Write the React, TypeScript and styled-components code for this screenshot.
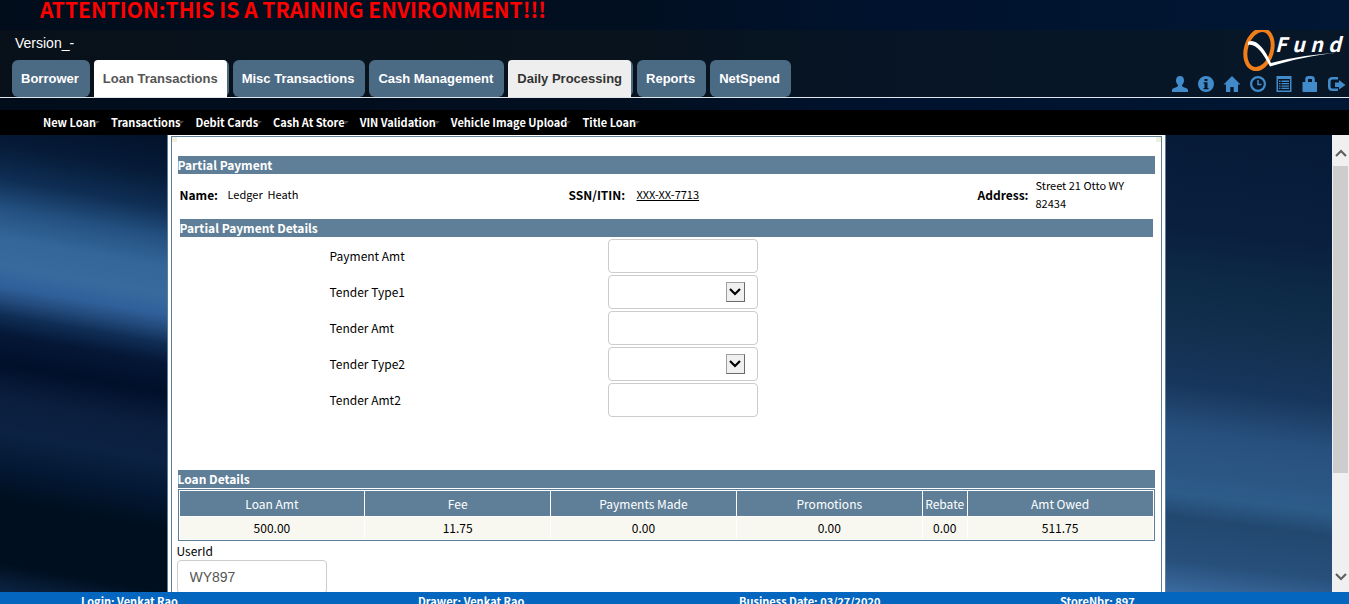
import React from "react";
import styled, { createGlobalStyle } from "styled-components";

const humanist = `"Noto Sans CJK SC", "Noto Sans", sans-serif`;
const grotesk = `"Liberation Sans", Arial, sans-serif`;
const steel = "#5f7f98";

const GlobalStyle = createGlobalStyle`
  *, *::before, *::after { box-sizing: border-box; }
  body { margin: 0; background: #000d20; overflow: hidden; }
`;

const Page = styled.div`
  display: flex;
  flex-direction: column;
  height: 100vh;
  overflow: hidden;
  font-family: ${humanist};
  font-size: 12px;
  line-height: 18px;
  color: #000;
`;

const Header = styled.header`
  flex: none;
  background: linear-gradient(90deg, #020d1c 0%, #020f20 45%, #00122d 65%, #011733 100%);
`;

const Warning = styled.h1`
  margin: 0;
  height: 30px;
  padding-left: 40px;
  font-size: 21px;
  line-height: 18px;
  font-weight: 700;
  color: #f00;
  white-space: nowrap;
`;

const Banner = styled.div`
  display: flex;
  justify-content: space-between;
  height: 68px;
  border-bottom: 1px solid #dfe6ec;
  background: rgba(18, 24, 24, 0.4);
`;

const BannerLeft = styled.div`
  display: flex;
  flex-direction: column;
  justify-content: space-between;
`;

const Version = styled.div`
  padding: 4px 0 0 15px;
  font-family: ${grotesk};
  font-size: 14px;
  color: #fff;
`;

const Tabs = styled.nav`
  display: flex;
  gap: 4px;
  padding-left: 12px;
`;

const Tab = styled.div`
  padding-right: 2px;
  border-radius: 6px;
  background: #4b6a84;
`;

const tabLook = {
  plain: { back: "transparent", ink: "#fff" },
  current: { back: "#fff", ink: "#555" },
  hover: { back: "#eee", ink: "#333" },
};

const TabLink = styled.a<{ $look: keyof typeof tabLook }>`
  display: block;
  padding: 0 9px;
  border-radius: 4px 4px 0 0;
  font-family: ${grotesk};
  font-size: 13px;
  font-weight: 700;
  line-height: 37px;
  text-decoration: none;
  white-space: nowrap;
  background: ${(p) => tabLook[p.$look].back};
  color: ${(p) => tabLook[p.$look].ink};
`;

const BannerRight = styled.div`
  display: flex;
  flex-direction: column;
  align-items: flex-end;
  justify-content: space-between;
  padding: 0 5px 5px 0;
`;

const IconRow = styled.div`
  display: flex;
  gap: 10px;
`;

const IconButton = styled.button`
  display: block;
  width: 16px;
  height: 16px;
  padding: 0;
  border: 0;
  background: none;
  color: #428bca;
  svg { display: block; overflow: visible; }
`;

const MenuBar = styled.nav`
  display: flex;
  margin-top: 12px;
  padding-left: 43px;
  height: 25px;
  background: #000;
`;

const MenuLink = styled.a`
  display: flex;
  align-items: center;
  margin-right: 11px;
  font-size: 11px;
  font-weight: 700;
  line-height: 25px;
  color: #fff;
  text-decoration: none;
  white-space: nowrap;
  &::after {
    content: "";
    margin-left: -2px;
    border: 3px solid transparent;
    border-top-color: #444;
    border-bottom: 0;
  }
`;

const Body = styled.div`
  display: flex;
  flex: 1;
  min-height: 0;
`;

const Stage = styled.main`
  display: flex;
  justify-content: center;
  flex: 1;
  min-width: 0;
  overflow: hidden;
`;

const Glow = styled.div<{ $stops: string }>`
  flex: 1;
  background: linear-gradient(${(p) => p.$stops});
`;

const Sheet = styled.div`
  width: 75%;
  padding: 1px 3px 0;
  border: solid ${steel};
  border-width: 0 1px;
  background: #fff;
`;

const SheetFrame = styled.div`
  min-height: 100%;
  padding: 19px 6px 0;
  border: 1px solid ${steel};
  background:
    linear-gradient(#eef1dc, #eef1dc) left top / 5px 5px no-repeat,
    linear-gradient(#eef1dc, #eef1dc) right top / 5px 5px no-repeat;
`;

const Bar = styled.h2<{ $inset?: boolean }>`
  margin: 0 ${(p) => (p.$inset ? 2 : 0)}px;
  font-size: 12px;
  line-height: 18px;
  font-weight: 700;
  color: #fff;
  background: ${steel};
`;

const Person = styled.dl`
  display: grid;
  grid-template-columns: 48px 341px 68px 341px 58px 1fr;
  align-items: center;
  margin: 0;
  padding: 0 0 3px 2px;
  height: 45px;
  dt { font-weight: 700; }
  dd { margin: 0; padding-bottom: 2px; font-size: 11px; }
  a { color: #000; }
`;

const Address = styled.dd`
  max-width: 100px;
`;

const Fields = styled.div`
  display: grid;
  gap: 2px;
  padding: 2px 0 53px 152px;
`;

const Field = styled.div`
  display: grid;
  grid-template-columns: 278px 150px;
  align-items: center;
`;

const TextBox = styled.input`
  display: block;
  width: 150px;
  height: 34px;
  padding: 6px 12px;
  border: 1px solid #ccc;
  border-radius: 4px;
  background: #fff;
  font-family: ${grotesk};
  font-size: 14px;
  color: #555;
`;

const SelectWrap = styled.div`
  position: relative;
`;

const Select = styled.select`
  appearance: none;
  display: block;
  width: 150px;
  height: 34px;
  padding: 6px 36px 6px 12px;
  border: 1px solid #ccc;
  border-radius: 4px;
  background: #fff;
  font-size: 14px;
`;

const SelectArrow = styled.span`
  position: absolute;
  top: 7px;
  right: 13px;
  display: grid;
  place-items: center;
  width: 19px;
  height: 20px;
  border: 1px solid;
  border-color: #a0a0a0 #696969 #696969 #a0a0a0;
  background: #f0f0f0;
  pointer-events: none;
`;

const LoanTable = styled.table`
  width: 100%;
  margin-top: 1px;
  border: 1px solid ${steel};
  border-collapse: separate;
  border-spacing: 1px;
  table-layout: fixed;
  text-align: center;
  th { height: 25px; padding: 0; font-weight: 400; color: #fff; background: ${steel}; }
  td { height: 22px; padding: 0; background: #f9f8f0; }
`;

const Col = styled.col<{ $width?: string }>`
  width: ${(p) => p.$width ?? "auto"};
`;

const UserField = styled.div`
  margin-left: -1px;
  padding-top: 1px;
  label { display: block; }
`;

const ScrollTrack = styled.div`
  display: flex;
  flex-direction: column;
  width: 17px;
  padding: 0 1px;
  background: #f0f0f0;
`;

const ScrollButton = styled.button<{ $drop?: number }>`
  display: grid;
  place-items: center;
  height: 31px;
  padding: ${(p) => p.$drop ?? 0}px 0 0;
  border: 0;
  background: none;
`;

const ScrollThumb = styled.div`
  flex: 307;
  background: #cdcdcd;
`;

const ScrollSpace = styled.div`
  flex: 88;
`;

const Footer = styled.footer`
  display: grid;
  grid-template-columns: 337px 321px 321px 1fr;
  flex: none;
  height: 12px;
  padding-left: 81px;
  overflow: hidden;
  font-size: 11px;
  font-weight: 700;
  line-height: 18px;
  color: #fff;
  background: #0566bf;
`;

const tabs: { label: string; look: keyof typeof tabLook }[] = [
  { label: "Borrower", look: "plain" },
  { label: "Loan Transactions", look: "current" },
  { label: "Misc Transactions", look: "plain" },
  { label: "Cash Management", look: "plain" },
  { label: "Daily Processing", look: "hover" },
  { label: "Reports", look: "plain" },
  { label: "NetSpend", look: "plain" },
];

const menu = ["New Loan", "Transactions", "Debit Cards", "Cash At Store", "VIN Validation", "Vehicle Image Upload", "Title Loan"];

const fields: { id: string; label: string; select?: boolean }[] = [
  { id: "payment-amt", label: "Payment Amt" },
  { id: "tender-type1", label: "Tender Type1", select: true },
  { id: "tender-amt", label: "Tender Amt" },
  { id: "tender-type2", label: "Tender Type2", select: true },
  { id: "tender-amt2", label: "Tender Amt2" },
];

const loan = [
  { name: "Loan Amt", value: "500.00" },
  { name: "Fee", value: "11.75" },
  { name: "Payments Made", value: "0.00" },
  { name: "Promotions", value: "0.00" },
  { name: "Rebate", value: "0.00", width: "44px" },
  { name: "Amt Owed", value: "511.75" },
];

const leftGlow =
  "190deg, #02122a 0%, #061b38 8%, #0f2e54 15%, #235080 21%, #34669a 27%, #386a9e 33%, #30609a 37%, #22497a 40%, #0f2d54 43%, #051736 47%, #00102a 53%, #0b1e3e 60%, #0c2243 67%, #031833 74%, #000f20 81%, #000f20 94%, #0b2444 100%";
const rightGlow =
  "187deg, #051a37 0%, #0a1e3e 22%, #0c2844 32%, #122f4e 44%, #17365c 56%, #28507e 66%, #2b5684 74%, #2d5c89 79%, #224870 84%, #274f7a 93%, #3a6ba0 100%";

const icons: { name: string; art: React.ReactNode }[] = [
  {
    name: "User",
    art: <path d="M8 0c2.400 0 4 1.500 4 4.200 0 2.100-.8 3.700-1.900 4.700-.4 1 .1 1.500 1.200 2 2.700 1 4.400 1.600 4.700 3.100V16H0v-2c.3-1.500 2-2.100 4.700-3.100 1.100-.5 1.600-1 1.200-2C4.800 7.900 4 6.300 4 4.200 4 1.500 5.600 0 8 0z" />,
  },
  {
    name: "Information",
    art: <path fillRule="evenodd" d="M8 0a8 8 0 1 1 0 16A8 8 0 0 1 8 0zM6.500 3v2h3V3zM5.500 6.200v1.300h1V12h-1v1.200h5V12h-1V6.200z" />,
  },
  {
    name: "Home",
    art: <path d="M8 0l8.500 8.500H14V16H9.700v-5H6.300v5H2V8.500H-.5z" />,
  },
  {
    name: "Time",
    art: (
      <g fill="none" stroke="currentColor">
        <circle cx="8" cy="8" r="6.900" strokeWidth="2.200" />
        <path d="M8 4v4.500h3.500" strokeWidth="1.500" />
      </g>
    ),
  },
  {
    name: "List",
    art: (
      <path
        fillRule="evenodd"
        d="M.5 0h15v16H.5zM2 3v11.500h12V3zM3 4.500h1.500V6H3zM5.500 4.500H13V6H5.500zM3 7h1.500v1.300H3zM5.500 7H13v1.300H5.500zM3 9.400h1.500v1.300H3zM5.500 9.400H13v1.300H5.500zM3 11.800h1.500V13H3zM5.500 11.800H13V13H5.500z"
      />
    ),
  },
  {
    name: "Lock",
    art: <path fillRule="evenodd" d="M3.200 6V3.200C3.200 1.200 4.500 0 6.200 0h3.600c1.700 0 3 1.200 3 3.200V6H15v9.500l-.5.5H1l-.5-.5V6zM6 6h4V3.500L9.500 3h-3L6 3.500z" />,
  },
  {
    name: "Log out",
    art: (
      <g>
        <path d="M10 2.200H4.500C2.500 2.200 1.300 3.300 1.300 5v6c0 1.700 1.200 2.800 3.200 2.800H10" fill="none" stroke="currentColor" strokeWidth="2.600" />
        <path d="M11 4l6.500 5-6.500 4.500V11H7V6.500h4z" />
      </g>
    ),
  },
];

const Logo = () => (
  <svg width="101" height="42" viewBox="0 0 101 42" role="img" aria-label="Q Fund">
    <ellipse cx="16" cy="19.500" rx="13" ry="20" transform="rotate(16 16 19.500)" fill="none" stroke="#f07e1a" strokeWidth="4" />
    <path d="M5 12C12 8 21 17 28 33 50 27 75 24 96 22.500 72 25 48 30 27 36.500 20 23 13 13 5 15z" fill="#fff" />
    <g fill="#fff" fontSize="20" fontWeight="700" fontStyle="italic">
      <text x="32" y="22">F</text>
      <text x="49" y="22">u</text>
      <text x="67" y="22">n</text>
      <text x="85" y="22">d</text>
    </g>
  </svg>
);

const Chevron = ({ up, ink, size }: { up?: boolean; ink: string; size: number }) => (
  <svg width={size} height="8" viewBox="0 0 12 8" fill="none" stroke={ink} strokeWidth="2.200" aria-hidden="true">
    <path d={up ? "M1 7l5-5 5 5" : "M1 1l5 5 5-5"} />
  </svg>
);

export default function App() {
  return (
    <Page>
      <GlobalStyle />
      <Header>
        <Warning>ATTENTION:THIS IS A TRAINING ENVIRONMENT!!!</Warning>
        <Banner>
          <BannerLeft>
            <Version>Version_-</Version>
            <Tabs>
              {tabs.map((t) => (
                <Tab key={t.label}>
                  <TabLink href="#" $look={t.look}>{t.label}</TabLink>
                </Tab>
              ))}
            </Tabs>
          </BannerLeft>
          <BannerRight>
            <Logo />
            <IconRow>
              {icons.map((i) => (
                <IconButton key={i.name} aria-label={i.name}>
                  <svg width="16" height="16" viewBox="0 0 16 16" fill="currentColor">{i.art}</svg>
                </IconButton>
              ))}
            </IconRow>
          </BannerRight>
        </Banner>
        <MenuBar>
          {menu.map((m) => (
            <MenuLink key={m} href="#">{m}</MenuLink>
          ))}
        </MenuBar>
      </Header>
      <Body>
        <Stage>
          <Glow $stops={leftGlow} />
          <Sheet>
            <SheetFrame>
              <Bar>Partial Payment</Bar>
              <Person>
                <dt>Name:</dt>
                <dd>Ledger&nbsp; Heath</dd>
                <dt>SSN/ITIN:</dt>
                <dd><a href="#">XXX-XX-7713</a></dd>
                <dt>Address:</dt>
                <Address>Street 21 Otto WY 82434</Address>
              </Person>
              <Bar $inset>Partial Payment Details</Bar>
              <Fields>
                {fields.map((f) => (
                  <Field key={f.id}>
                    <label htmlFor={f.id}>{f.label}</label>
                    {f.select ? (
                      <SelectWrap>
                        <Select id={f.id} />
                        <SelectArrow><Chevron ink="#000" size={12} /></SelectArrow>
                      </SelectWrap>
                    ) : (
                      <TextBox id={f.id} type="text" />
                    )}
                  </Field>
                ))}
              </Fields>
              <Bar>Loan Details</Bar>
              <LoanTable>
                <colgroup>
                  {loan.map((c) => <Col key={c.name} $width={c.width} />)}
                </colgroup>
                <thead>
                  <tr>{loan.map((c) => <th key={c.name} scope="col">{c.name}</th>)}</tr>
                </thead>
                <tbody>
                  <tr>{loan.map((c) => <td key={c.name}>{c.value}</td>)}</tr>
                </tbody>
              </LoanTable>
              <UserField>
                <label htmlFor="user-id">UserId</label>
                <TextBox id="user-id" type="text" defaultValue="WY897" />
              </UserField>
            </SheetFrame>
          </Sheet>
          <Glow $stops={rightGlow} />
        </Stage>
        <ScrollTrack>
          <ScrollButton $drop={5} aria-label="Scroll up"><Chevron up ink="#606060" size={12} /></ScrollButton>
          <ScrollThumb />
          <ScrollSpace />
          <ScrollButton aria-label="Scroll down"><Chevron ink="#606060" size={12} /></ScrollButton>
        </ScrollTrack>
      </Body>
      <Footer>
        <span>Login: Venkat Rao</span>
        <span>Drawer: Venkat Rao</span>
        <span>Business Date: 03/27/2020</span>
        <span>StoreNbr: 897</span>
      </Footer>
    </Page>
  );
}
